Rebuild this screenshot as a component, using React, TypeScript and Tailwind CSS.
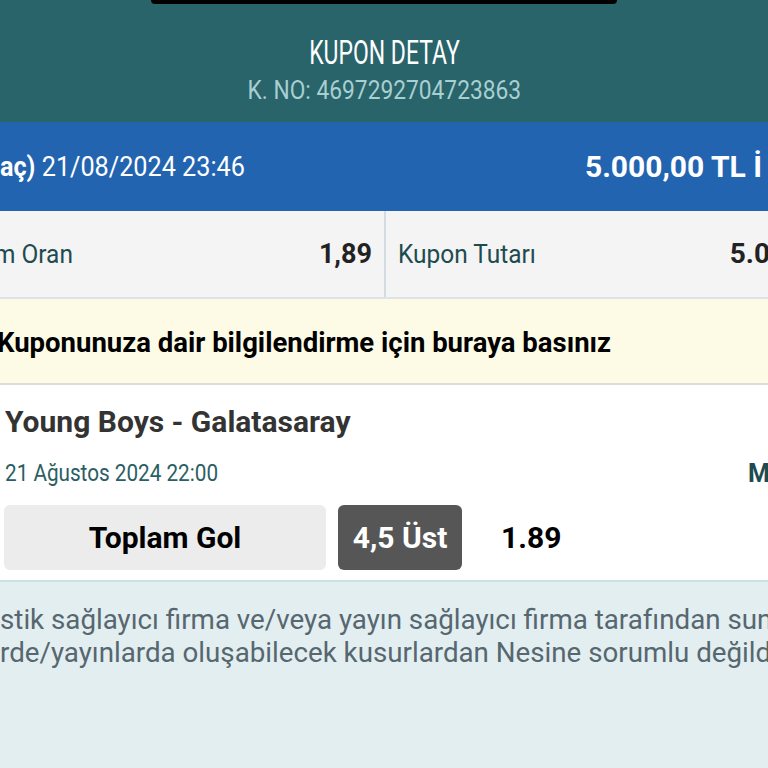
export default function App() {
  return (
    <div className="relative h-[768px] w-[768px] overflow-hidden bg-[#e3eef1] font-['Roboto',sans-serif]">
      {/* header */}
      <div className="flex h-[122px] flex-col items-center bg-[#29646a]">
        <div className="h-[4px] w-[466px] rounded-b-[8px] bg-black" />
        <div className="mt-[28px] flex h-[40px] items-center text-[34px] text-white">
          <span className="inline-block scale-x-[0.675]">KUPON DETAY</span>
        </div>
        <div className="flex h-[36px] items-center text-[26px] text-[#a8cfd2]">
          <span className="inline-block scale-x-[0.875]">K. NO: 4697292704723863</span>
        </div>
      </div>

      {/* summary bar */}
      <div className="flex h-[89px] items-center justify-between bg-[#2364b1] text-white">
        <div className="whitespace-nowrap text-[28px]">
          <span className="inline-block origin-left scale-x-[0.9]">
            <span className="font-bold">aç)</span> 21/08/2024 23:46
          </span>
        </div>
        <div className="mr-[6px] whitespace-nowrap text-[30px] font-bold">5.000,00 TL İ</div>
      </div>

      {/* totals */}
      <div className="grid h-[88px] grid-cols-[386px_1fr] border-b-2 border-[#dde3e6] bg-[#f4f4f5]">
        <div className="flex items-center justify-between border-r-2 border-[#d3dde1] pr-[12px]">
          <span className="-ml-[6px] inline-block origin-left scale-x-[0.94] text-[26px] text-[#1e4b4f]">m Oran</span>
          <span className="text-[27px] font-bold text-[#222]">1,89</span>
        </div>
        <div className="flex items-center justify-between overflow-hidden pl-[12px]">
          <span className="inline-block origin-left scale-x-[0.94] whitespace-nowrap text-[26px] text-[#1e4b4f]">
            Kupon Tutarı
          </span>
          <span className="-mr-[2px] text-[28px] font-bold text-[#222]">5.0</span>
        </div>
      </div>

      {/* info */}
      <div className="flex h-[86px] items-center border-b-2 border-[#dcdcdc] bg-[#fdfbe6] pt-[4px]">
        <span className="-ml-[3px] whitespace-nowrap text-[27.5px] font-bold text-black">
          Kuponunuza dair bilgilendirme için buraya basınız
        </span>
      </div>

      {/* event */}
      <div className="border-b-2 border-[#cfe0e3] bg-white pb-[10px]">
        <div className="flex h-[72px] items-center pl-[5px] text-[30px] font-bold text-[#333]">
          Young Boys - Galatasaray
        </div>
        <div className="flex h-[34px] items-center justify-between pl-[5px]">
          <span className="inline-block origin-left scale-x-[0.9] text-[23px] text-[#2b5e64]">
            21 Ağustos 2024 22:00
          </span>
          <span className="-mr-[2px] text-[25px] font-bold text-[#1e4b4f]">M</span>
        </div>
        <div className="mt-[14px] flex h-[65px] items-center pl-[4px]">
          <div className="flex h-full w-[322px] items-center justify-center rounded-[6px] bg-[#ececec] text-[30px] font-bold text-black">
            Toplam Gol
          </div>
          <div className="ml-[12px] flex h-full w-[124px] items-center justify-center rounded-[6px] bg-[#565656] text-[30px] font-bold text-white">
            4,5 Üst
          </div>
          <div className="ml-[39px] text-[30px] font-bold text-black">1.89</div>
        </div>
      </div>

      {/* disclaimer */}
      <div className="pt-[21px] text-[28px] leading-[33px] text-[#56676f]">
        <div className="origin-left scale-x-[0.99] whitespace-nowrap">
          stik sağlayıcı firma ve/veya yayın sağlayıcı firma tarafından sunulan
        </div>
        <div className="origin-left scale-x-[0.99] whitespace-nowrap">
          rde/yayınlarda oluşabilecek kusurlardan Nesine sorumlu değildir.
        </div>
      </div>
    </div>
  );
}
